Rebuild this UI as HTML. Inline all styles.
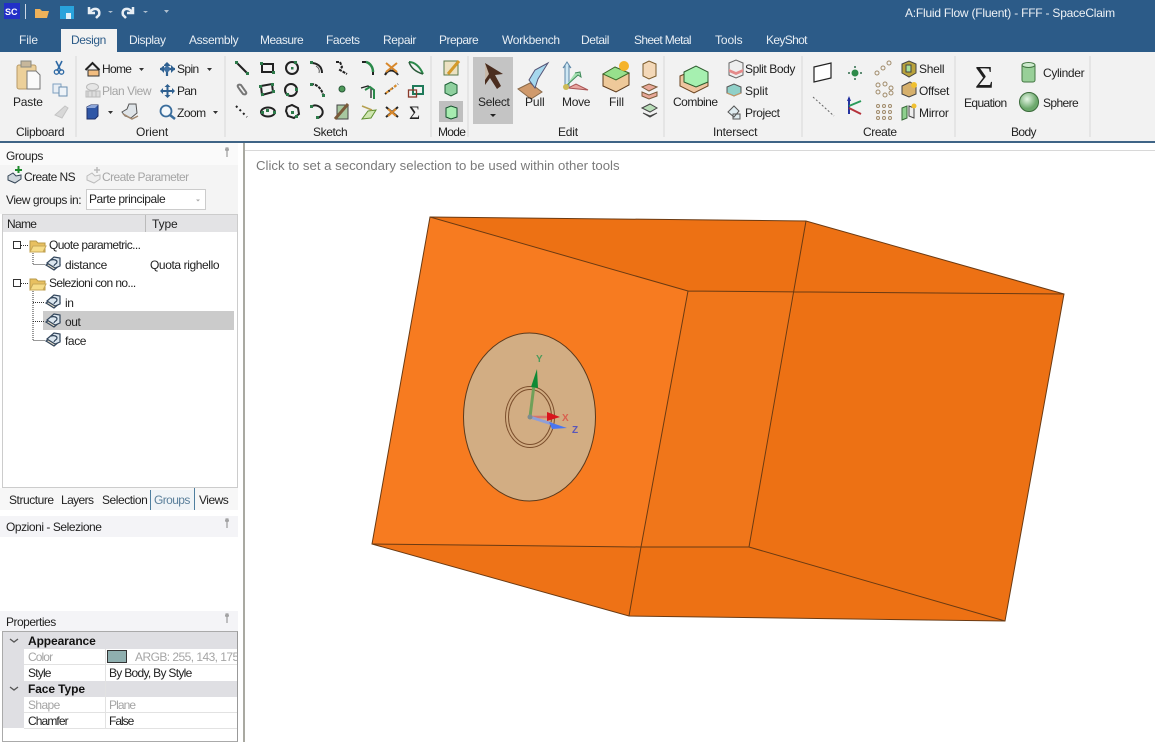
<!DOCTYPE html>
<html><head><meta charset="utf-8"><style>
html,body{margin:0;padding:0;width:1155px;height:742px;overflow:hidden;background:#fff}
body{position:relative;font-family:"Liberation Sans",sans-serif;font-size:12px;color:#222}
.t{position:absolute;white-space:nowrap;line-height:14px;letter-spacing:-.4px}
.b{position:absolute}
.w{color:#e8eef4}.g{color:#a5a5a5}
svg{position:absolute;left:0;top:0}
</style></head><body>
<div class="b" style="left:0;top:0;width:1155px;height:52px;background:#2c5b88"></div>
<div class="b" style="left:0;top:52px;width:1155px;height:89px;background:#f2f2f2"></div>
<div class="b" style="left:0;top:141px;width:1155px;height:2px;background:#3f6486"></div>
<div class="b" style="left:61px;top:29px;width:56px;height:23px;background:#f2f2f2"></div>
<div class="b" style="left:0;top:143px;width:238px;height:22px;background:#fafafa"></div>
<div class="b" style="left:0;top:165px;width:238px;height:49px;background:#f4f4f4"></div>
<div class="b" style="left:0;top:488px;width:238px;height:22px;background:#f7f7f7"></div>
<div class="b" style="left:0;top:516px;width:238px;height:21px;background:#f4f4f7"></div>
<div class="b" style="left:0;top:611px;width:238px;height:20px;background:#f4f4f7"></div>
<div class="b" style="left:243px;top:143px;width:2px;height:599px;background:#a9a9a1"></div>
<div class="b" style="left:245px;top:150px;width:910px;height:1px;background:#d8d8d8"></div>
<div class="b" style="left:2px;top:214px;width:236px;height:274px;background:#fff;border:1px solid #ccc;box-sizing:border-box"></div>
<div class="b" style="left:3px;top:215px;width:234px;height:17px;background:#e3e3e5"></div>
<div class="b" style="left:145px;top:215px;width:1px;height:17px;background:#bbb"></div>
<div class="b" style="left:43px;top:311px;width:191px;height:19px;background:#cbcbcb"></div>
<div class="b" style="left:86px;top:189px;width:120px;height:21px;background:#fff;border:1px solid #ccc;box-sizing:border-box"></div>
<div class="b" style="left:2px;top:631px;width:236px;height:111px;background:#fff;border:1px solid #aaa;border-right:1px solid #999;box-sizing:border-box"></div>
<div class="b" style="left:3px;top:632px;width:21px;height:96px;background:#dfdfe3"></div>
<div class="b" style="left:3px;top:632px;width:234px;height:17px;background:#dfdfe3"></div>
<div class="b" style="left:3px;top:681px;width:234px;height:16px;background:#dfdfe3"></div>
<div class="b" style="left:24px;top:664px;width:213px;height:1px;background:#e2e2e2"></div>
<div class="b" style="left:24px;top:712px;width:213px;height:1px;background:#e2e2e2"></div>
<div class="b" style="left:24px;top:728px;width:213px;height:1px;background:#e2e2e2"></div>
<div class="b" style="left:105px;top:649px;width:1px;height:80px;background:#e2e2e2"></div>
<div class="b" style="left:107px;top:650px;width:20px;height:13px;background:#8fafaf;border:1px solid #333;box-sizing:border-box"></div>
<div class="b" style="left:151px;top:490px;width:43px;height:20px;background:#f0f4f7"></div>
<div class="b" style="left:150px;top:490px;width:1px;height:20px;background:#4f7f9f"></div>
<div class="b" style="left:194px;top:488px;width:1px;height:22px;background:#4f7f9f"></div>

<svg width="1155" height="742" viewBox="0 0 1155 742">
<!-- model -->
<polygon points="430,217 806,221 1064,294 1005,621 629,616 372,544" fill="#ed7114"/>
<polygon points="430,217 688,291 641,547 372,544" fill="#f77b20"/>
<polygon points="688,291 795,292 749,547 641,547" fill="#f0761a"/>
<polygon points="372,544 641,547 629,616" fill="#ee7216"/>
<g fill="none" stroke="#6b3a12" stroke-width="1">
<polygon points="430,217 806,221 1064,294 1005,621 629,616 372,544"/>
<path d="M430,217 688,291 641,547 372,544M688,291 1064,294M806,221 749,547M641,547H749L1005,621M641,547 629,616"/>
</g>
<ellipse cx="529.500" cy="417" rx="66" ry="84" fill="#d2ad83" stroke="#5c3a1c"/>
<ellipse cx="530" cy="417" rx="24.500" ry="30.500" fill="none" stroke="#7c4f2d"/>
<ellipse cx="530" cy="417" rx="21.500" ry="27.500" fill="none" stroke="#7c4f2d"/>
<path d="M530,417 534,385" stroke="#6fa059" stroke-width="3"/>
<polygon points="537,369 538,388 531,387" fill="#0f8a35"/>
<path d="M530,417H552" stroke="#d8736b" stroke-width="2.500"/>
<polygon points="547,412 560,417 547,421" fill="#d8141c"/>
<path d="M530,417 552,424" stroke="#8f9fd8" stroke-width="3"/>
<polygon points="549,422 567,428 552,429" fill="#4a76f0"/>
<circle cx="530" cy="417" r="2.500" fill="#7d8b8f"/>
<text x="536" y="362" font-family="Liberation Sans" font-size="10" font-weight="bold" fill="#4c9a5a">Y</text>
<text x="562" y="421" font-family="Liberation Sans" font-size="10" font-weight="bold" fill="#d9614f">X</text>
<text x="572" y="433" font-family="Liberation Sans" font-size="10" font-weight="bold" fill="#5a56b8">Z</text>

<!-- QAT -->
<rect x="4" y="3" width="16" height="16" fill="#2230c8"/>
<text x="5" y="15" font-family="Liberation Sans" font-size="9" font-weight="bold" fill="#fff">SC</text>
<path d="M25.500,4V19" stroke="#cdd8e4"/>
<path d="M35,9h5l2,2h7l-2,7H35z" fill="#eeb25a"/>
<rect x="60" y="6" width="14" height="13" fill="#29a3dc"/><rect x="66" y="13" width="5" height="6" fill="#dfeff8"/>
<path d="M89,7v6h6M90,12c3-5 11-4 9,3l-3,3" fill="none" stroke="#e8eef4" stroke-width="2.500"/>
<path d="M133,7v6h-6M132,12c-3-5-11-4-9,3l3,3" fill="none" stroke="#e8eef4" stroke-width="2.500"/>
<path d="M108,11h5l-2.500,2zM143,11h5l-2.500,2zM164,10h5l-2.500,3z" fill="#aebfcf"/>

<!-- separators -->
<g stroke="#d8d8d8"><path d="M76,56V137M225,56V137M431,56V137M468,56V137M664,56V137M802,56V137M955,56V137M1090,56V137"/></g>

<!-- clipboard -->
<rect x="17" y="65" width="19" height="24" rx="2" fill="#ecd09a" stroke="#b89a68"/><rect x="21" y="61" width="10" height="6" fill="#c7b79b" stroke="#8a8a80"/><path d="M27,71h9l4,4v14H27z" fill="#fafafa" stroke="#777"/>
<path d="M56,61l5,10M62,61l-5,10" stroke="#2f6aa5" stroke-width="1.600"/><circle cx="56.500" cy="72" r="2.200" fill="none" stroke="#2f6aa5" stroke-width="1.300"/><circle cx="61.500" cy="72" r="2.200" fill="none" stroke="#2f6aa5" stroke-width="1.300"/>
<rect x="53" y="84" width="8" height="9" fill="#e8eef4" stroke="#7fa0c0"/><rect x="59" y="87" width="8" height="9" fill="#eef3f8" stroke="#6a8fb0"/>
<path d="M55,115l10-9 3,2-6,10z" fill="#d8d8d8" stroke="#c4c4c4"/>

<!-- orient -->
<path d="M88,70h11v6H88z" fill="#f2bd80" stroke="#333"/><path d="M85.500,70l7-7 7,7" fill="none" stroke="#222" stroke-width="2"/>
<ellipse cx="92.500" cy="87" rx="6" ry="3.500" fill="#e6e6e6" stroke="#bbb"/><path d="M86,91h14v6H86zM88,91v6M92,91v6M96,91v6" fill="#ddd" stroke="#bbb"/>
<path d="M87,107l4-2h7v11l-3,3h-8z" fill="#2f56a6" stroke="#1d2d66"/><path d="M87,107l4-2h7l-3,3h-8z" fill="#8da6d8"/>
<path d="M122,112l5-3 2-5h7l1,9-6,5-6-2z" fill="#dfe4e8" stroke="#555"/><path d="M123,114l9,5 6-3" fill="none" stroke="#a08870" stroke-width="1.500"/>
<path d="M160,69h15M167,63v13" stroke="#2f6090" stroke-width="2.200"/><path d="M160,69l4-4v8zM175,69l-4-4v8zM167,62l-4,4h8z" fill="#2f6090"/><circle cx="167" cy="69" r="3" fill="#3f70a2"/>
<path d="M162,91h11M167.500,86v10" stroke="#2f6090" stroke-width="2"/><path d="M167.500,84l-3,3h6zM167.500,98l-3-3h6zM160,91l3-3v6zM175,91l-3-3v6z" fill="#2f6090"/>
<circle cx="166" cy="111" r="5.500" fill="#f4f8fb" stroke="#3a6d9c" stroke-width="1.800"/><path d="M170,115l5,4" stroke="#3a6d9c" stroke-width="2.500"/>
<path d="M139,68h5l-2.500,3zM207,68h5l-2.500,3zM108,111h5l-2.500,3zM213,111h5l-2.500,3z" fill="#333"/>

<!-- sketch left -->
<g fill="none" stroke="#222" stroke-width="2">
<path d="M236,62l11,11"/>
<rect x="262" y="64" width="11" height="8"/>
<circle cx="292" cy="68" r="6"/>
<path d="M311,63c6,0 11,3 11,10"/><path d="M316,66c3,2 4,4 3,7" stroke-width="1" stroke="#555"/>
<path d="M240,90l-2-3c-1-2 1-3 3-2l5,7c1,2-1,3-3,2z" stroke="#777"/>
<path d="M261,86l11-2 1,8-11,3z"/>
<circle cx="291" cy="90" r="6"/>
<path d="M311,84c6,0 11,5 12,11" stroke-dasharray="3 1"/>
<path d="M236,106l11,11" stroke-dasharray="2 3"/>
<ellipse cx="268" cy="112" rx="7" ry="4.500"/>
<path d="M287,107l5-2 6,3 1,6-5,4-6-2-2-5z"/>
<path d="M311,107c2-2 5-2 7-1c5,2 6,7 3,10c-1,1-3,2-5,2"/>
</g>
<g fill="#2d7a4a"><rect x="235" y="61" width="3" height="3"/><rect x="246" y="72" width="3" height="3"/><rect x="260" y="62" width="3" height="3"/><rect x="272" y="71" width="3" height="3"/><rect x="291" y="67" width="2.500" height="2.500"/><rect x="294" y="61" width="3" height="3"/><rect x="310" y="61" width="3" height="3"/><rect x="259" y="85" width="3" height="3"/><rect x="271" y="83" width="3" height="3"/><rect x="272" y="90" width="3" height="3"/><rect x="261" y="93" width="3" height="3"/><rect x="286" y="93" width="3" height="3"/><rect x="295" y="88" width="3" height="3"/><rect x="310" y="83" width="3" height="3"/><rect x="322" y="94" width="3" height="3"/><rect x="266" y="109" width="3" height="3"/><rect x="261" y="111" width="3" height="3"/><rect x="273" y="111" width="3" height="3"/><rect x="291" y="111" width="3" height="3"/><rect x="295" y="115" width="3" height="3"/><rect x="310" y="105" width="3" height="3"/><rect x="316" y="116" width="3" height="3"/></g>

<!-- sketch right -->
<g fill="none" stroke-width="2">
<path d="M336,62h4l2,5-2,3 7,4" stroke="#222" stroke-dasharray="3 1"/>
<path d="M362,62h4" stroke="#222"/><path d="M366,62c4,1 7,5 7,10" stroke="#2a8a4a" stroke-width="2.500"/><path d="M373,72v3" stroke="#222"/>
<path d="M385,75c3-6 9-6 13,0" stroke="#222"/><path d="M386,63l11,9M397,63l-11,9" stroke="#d8882c"/>
<path d="M409,62c6,0 11,5 14,12" stroke="#2a8a4a"/><path d="M409,62c2,6 7,10 14,12" stroke="#2a5a3a" stroke-width="1.500"/>
<path d="M361,88l7-2 3,2v10" stroke="#222" stroke-width="1.300"/><path d="M365,90l5-3 4,3v9" stroke="#2a8a4a"/>
<path d="M385,94l13-10" stroke="#222" stroke-dasharray="2 2"/><path d="M386,93l12-9" stroke="#e0902c" stroke-dasharray="3 2"/>
<rect x="413" y="86" width="10" height="8" stroke="#1f7a5a"/><rect x="408.500" y="90" width="8" height="7" stroke="#8a3a2a" stroke-width="1.300"/>
<path d="M386,107l12,10M398,107l-12,10" stroke="#222"/><path d="M388,109l8,7M396,109l-8,7" stroke="#d8882c"/>
</g>
<circle cx="342" cy="89" r="3" fill="#4f9a5a" stroke="#2a5a3a"/>
<path d="M337,105h11v14h-11z" fill="#a8c8a0" stroke="#444"/><path d="M335,119l13-15" stroke="#7a5a3a" stroke-width="3"/>
<path d="M362,119l6-8 8-1-5,8z" fill="#cfe6b0" stroke="#5f9030"/><path d="M362,106l10,4" stroke="#b5a050" stroke-width="1.500" fill="none"/>
<text x="409" y="119" font-family="Liberation Serif" font-size="19" fill="#222">Σ</text>

<!-- mode -->
<rect x="444" y="61" width="14" height="14" fill="#ece2c2" stroke="#5c7a4c"/><path d="M448,74l11-13" stroke="#d49a2a" stroke-width="3"/>
<path d="M445,85l6-3 6,3v8l-6,3-6-3z" fill="#8fd09f" stroke="#1d5f36"/>
<rect x="439" y="101" width="24" height="21" fill="#bfbfbf"/>
<path d="M446,108l5-2 6,2v9l-6,2-5-2z" fill="#a7ecb0" stroke="#16512e"/>

<!-- edit -->
<rect x="473" y="57" width="40" height="67" fill="#c4c4c4"/>
<polygon points="485,63 485,85 490,78 497,89 501,86 495,75 503,74" fill="#4a2d1f"/><polygon points="485,63 485,80 489,74" fill="#c7b8a8"/>
<path d="M490,114h6l-3,3z" fill="#222"/>
<polygon points="518,89 530,83 542,92 531,99" fill="#d09a6c" stroke="#8a6a4a"/><polygon points="548,63 535,70 529,80 535,88 538,79" fill="#a6d8ee" stroke="#557"/>
<path d="M565,66v22h4V66l2,2-4-6-4,6z" fill="#cfe8f4" stroke="#5f88a8"/><path d="M566,86l12-11 3,2-1-5-5 1" fill="#a4e0b0" stroke="#3f8a5a"/><path d="M568,88l20,2-12-6z" fill="#e8a5a0" stroke="#a55"/><circle cx="566" cy="87" r="3" fill="#cdbb55"/>
<path d="M603,74l12-7 14,6v12l-13,7-13-6z" fill="#eec99a" stroke="#5c3a1c"/><path d="M603,74l12-7 14,6-13,7z" fill="#97e08c" stroke="#3a6a2a"/><circle cx="624" cy="66" r="5" fill="#f5b32a"/>
<path d="M643,64l6-3 7,3v12l-7,3-6-3z" fill="#f3d8b8" stroke="#7a5a2a"/>
<path d="M642,87l7-3 8,3-8,4zM642,92l7 3 8-3v4l-8,3-7-3z" fill="#e8a898" stroke="#7a5a3a"/>
<path d="M642,108l8-4 7,4-7,4zM643,113l7,3 7-3-7,4z" fill="#b8ddb8" stroke="#444"/>

<!-- intersect -->
<path d="M680,76l14-6 14,6v10l-14,7-14-7z" fill="#eec5a0" stroke="#6a4420"/>
<path d="M684,72l12-6 12,6v10l-12,5-12-5z" fill="#a6f0b0" stroke="#2c5a2c"/>
<path d="M729,63l7-3 7,3v12l-7,3-7-3z" fill="#eee" stroke="#666"/><path d="M729,69l7,3 7-3v3l-7,3-7-3z" fill="#e58a8a"/>
<path d="M727,87l7-3 7,3v6l-7,3-7-3z" fill="#90d0c8" stroke="#555"/><path d="M727,93l7,3 7-3" fill="none" stroke="#c96"/>
<path d="M728,112l6-6 5,5-5,6zM733,114h7v5h-7z" fill="#e0ecf0" stroke="#555"/>

<!-- create -->
<path d="M814,67l17-4v15l-17,4z" fill="#fff" stroke="#222" stroke-width="1.200"/>
<path d="M813,97l21,19" stroke="#666" stroke-dasharray="2 2"/>
<circle cx="855" cy="73" r="3.500" fill="#2e8a4a"/><path d="M848,73h2M860,73h2M855,66v2M855,78v2" stroke="#2e6a4a" stroke-width="1.500"/>
<path d="M849,114V98" stroke="#2533a0" stroke-width="2"/><path d="M849,96l-2,5h4z" fill="#2533a0"/><path d="M849,106l12-5" stroke="#2a9a5a" stroke-width="2"/><path d="M849,108l12,6" stroke="#b5313a" stroke-width="2"/>
<g fill="none" stroke="#a08b6a"><circle cx="877" cy="73" r="2"/><circle cx="883" cy="68" r="2"/><circle cx="889" cy="63" r="2"/>
<circle cx="878" cy="85" r="2"/><circle cx="885" cy="84" r="2"/><circle cx="891" cy="88" r="2"/><circle cx="878" cy="92" r="2"/><circle cx="885" cy="95" r="2"/><circle cx="891" cy="93" r="2"/>
<circle cx="878" cy="106" r="1.500"/><circle cx="884" cy="106" r="1.500"/><circle cx="890" cy="106" r="1.500"/><circle cx="878" cy="112" r="1.500"/><circle cx="884" cy="112" r="1.500"/><circle cx="890" cy="112" r="1.500"/><circle cx="878" cy="118" r="1.500"/><circle cx="884" cy="118" r="1.500"/><circle cx="890" cy="118" r="1.500"/></g>
<path d="M902,64l7-3 7,3v9l-7,4-7-4z" fill="#b8a23c" stroke="#444"/><rect x="906" y="65" width="5" height="7" fill="#a6e09c" stroke="#444"/>
<path d="M902,86l8-4 6,4v8l-7,3-7-3z" fill="#d6b06c" stroke="#444"/><circle cx="914" cy="85" r="3" fill="#f0c030"/>
<path d="M902,108l5-2v12l-5,2z" fill="#8ed08e" stroke="#3a6a3a"/><path d="M909,106l5 2v10l-5-2z" fill="#eee" stroke="#444"/><circle cx="914" cy="106" r="2.500" fill="#f0c030"/>

<!-- body -->
<text x="975" y="88" font-family="Liberation Serif" font-size="32" fill="#1f1f1f">Σ</text>
<rect x="1022" y="64" width="13" height="18" rx="2" fill="#98cf98" stroke="#447744"/><ellipse cx="1028.500" cy="65" rx="6.500" ry="2.500" fill="#cdeacd" stroke="#447744"/>
<defs><radialGradient id="s" cx=".4" cy=".35"><stop offset="0" stop-color="#e6f6e6"/><stop offset="1" stop-color="#6ca86c"/></radialGradient></defs>
<circle cx="1029" cy="102" r="9.500" fill="url(#s)" stroke="#3a6a3a"/>

<!-- pins -->
<path d="M225,150h4M227,150v4M226,150v-2h2v2M227,154v3" stroke="#888" fill="none"/>
<path d="M225,521h4M227,521v4M226,521v-2h2v2M227,525v3" stroke="#888" fill="none"/>
<path d="M225,616h4M227,616v4M226,616v-2h2v2M227,620v3" stroke="#888" fill="none"/>
<!-- create NS -->
<path d="M8,176l5-3 3,3 5,-1v4l-6,4-7-3z" fill="#cfd6dc" stroke="#345"/><path d="M15,170h7M18.500,166v7" stroke="#1f8a2e" stroke-width="2"/>
<path d="M87,176l5-3 3,3 5,-1v4l-6,4-7-3z" fill="#eee" stroke="#bbb"/><path d="M94,170h6M97,167v6" stroke="#bbb" stroke-width="1.500"/>
<path d="M196,199.500h4l-2,2z" fill="#aaa"/>
<!-- tree -->
<g fill="none" stroke="#333" stroke-dasharray="1 1"><path d="M21,245.500h7M21,283.500h7M33,253v11.500h12M33,291v49.500h12M33,302.500h12M33,321.500h12"/></g>
<rect x="13.500" y="241.500" width="7" height="7" fill="#fff" stroke="#333"/>
<rect x="13.500" y="279.500" width="7" height="7" fill="#fff" stroke="#333"/>
<path d="M30,241h6l2,2h7v9H30z" fill="#e8c060" stroke="#b89a48"/><path d="M30,252l3-6h13l-3,6z" fill="#f6dc88" stroke="#c8a858"/>
<path d="M30,279h6l2,2h7v9H30z" fill="#e8c060" stroke="#b89a48"/><path d="M30,290l3-6h13l-3,6z" fill="#f6dc88" stroke="#c8a858"/>
<g stroke="#33465c" stroke-width="1.200" fill="#e6dcc8">
<path d="M46,265l7-4 7,4-6,5z"/><path d="M47,263l7-6 6,1v8l-5,2z" fill="#dbe6ef"/><path d="M51,260c3-1 6,0 6,2s-3,2-3,4" fill="none"/>
<path d="M46,303l7-4 7,4-6,5z"/><path d="M47,301l7-6 6,1v8l-5,2z" fill="#dbe6ef"/><path d="M51,298c3-1 6,0 6,2s-3,2-3,4" fill="none"/>
<path d="M46,322l7-4 7,4-6,5z"/><path d="M47,320l7-6 6,1v8l-5,2z" fill="#dbe6ef"/><path d="M51,317c3-1 6,0 6,2s-3,2-3,4" fill="none"/>
<path d="M46,341l7-4 7,4-6,5z"/><path d="M47,339l7-6 6,1v8l-5,2z" fill="#dbe6ef"/><path d="M51,336c3-1 6,0 6,2s-3,2-3,4" fill="none"/>
</g>
<path d="M10,639l4,3 4-3M10,687l4,3 4-3" stroke="#555" fill="none" stroke-width="1.300"/>
</svg>

<div class="t w" style="left:905px;top:6px;letter-spacing:-.22px;color:#eef2f6">A:Fluid Flow (Fluent) - FFF - SpaceClaim</div>
<div class="t w" style="left:19px;top:33px;letter-spacing:-.1px">File</div>
<div class="t" style="left:71px;top:33px;color:#2c5b88">Design</div>
<div class="t w" style="left:129px;top:33px">Display</div>
<div class="t w" style="left:189px;top:33px;letter-spacing:-.35px">Assembly</div>
<div class="t w" style="left:260px;top:33px;letter-spacing:-.5px">Measure</div>
<div class="t w" style="left:326px;top:33px">Facets</div>
<div class="t w" style="left:383px;top:33px">Repair</div>
<div class="t w" style="left:439px;top:33px;letter-spacing:-.5px">Prepare</div>
<div class="t w" style="left:502px;top:33px;letter-spacing:-.3px">Workbench</div>
<div class="t w" style="left:581px;top:33px;letter-spacing:-.45px">Detail</div>
<div class="t w" style="left:634px;top:33px;letter-spacing:-.65px">Sheet Metal</div>
<div class="t w" style="left:715px;top:33px;letter-spacing:-.1px">Tools</div>
<div class="t w" style="left:766px;top:33px;letter-spacing:-.65px">KeyShot</div>

<div class="t" style="left:13px;top:95px;letter-spacing:-.2px">Paste</div>
<div class="t" style="left:16px;top:125px;letter-spacing:-.35px">Clipboard</div>
<div class="t" style="left:102px;top:62px;letter-spacing:-.7px">Home</div>
<div class="t g" style="left:102px;top:84px;letter-spacing:-.45px">Plan View</div>
<div class="t" style="left:177px;top:62px;letter-spacing:-.6px">Spin</div>
<div class="t" style="left:177px;top:84px;letter-spacing:-.7px">Pan</div>
<div class="t" style="left:177px;top:106px;letter-spacing:-.5px">Zoom</div>
<div class="t" style="left:136px;top:125px;letter-spacing:-.1px">Orient</div>
<div class="t" style="left:313px;top:125px">Sketch</div>
<div class="t" style="left:438px;top:125px;letter-spacing:-.7px">Mode</div>
<div class="t" style="left:478px;top:95px;letter-spacing:-.3px">Select</div>
<div class="t" style="left:525px;top:95px;letter-spacing:-.1px">Pull</div>
<div class="t" style="left:562px;top:95px;letter-spacing:-.3px">Move</div>
<div class="t" style="left:609px;top:95px;letter-spacing:-.1px">Fill</div>
<div class="t" style="left:558px;top:125px;letter-spacing:-.2px">Edit</div>
<div class="t" style="left:673px;top:95px;letter-spacing:-.5px">Combine</div>
<div class="t" style="left:745px;top:62px">Split Body</div>
<div class="t" style="left:745px;top:84px;letter-spacing:-.1px">Split</div>
<div class="t" style="left:745px;top:106px">Project</div>
<div class="t" style="left:713px;top:125px;letter-spacing:-.2px">Intersect</div>
<div class="t" style="left:919px;top:62px;letter-spacing:-.3px">Shell</div>
<div class="t" style="left:919px;top:84px;letter-spacing:-.3px">Offset</div>
<div class="t" style="left:919px;top:106px;letter-spacing:-.3px">Mirror</div>
<div class="t" style="left:863px;top:125px">Create</div>
<div class="t" style="left:964px;top:96px;letter-spacing:-.6px">Equation</div>
<div class="t" style="left:1043px;top:66px;letter-spacing:-.35px">Cylinder</div>
<div class="t" style="left:1043px;top:96px;letter-spacing:-.6px">Sphere</div>
<div class="t" style="left:1011px;top:125px;letter-spacing:-.6px">Body</div>

<div class="t" style="left:256px;top:159px;color:#7a7a7a;font-size:13.200px;letter-spacing:0">Click to set a secondary selection to be used within other tools</div>

<div class="t" style="left:6px;top:149px">Groups</div>
<div class="t" style="left:24px;top:170px;letter-spacing:-.55px">Create NS</div>
<div class="t g" style="left:102px;top:170px;letter-spacing:-.55px">Create Parameter</div>
<div class="t" style="left:6px;top:193px;letter-spacing:-.45px">View groups in:</div>
<div class="t" style="left:89px;top:192px;letter-spacing:-.45px">Parte principale</div>
<div class="t" style="left:7px;top:217px;letter-spacing:-.7px">Name</div>
<div class="t" style="left:152px;top:217px;letter-spacing:-.1px">Type</div>
<div class="t" style="left:49px;top:238px;letter-spacing:-.6px">Quote parametric...</div>
<div class="t" style="left:65px;top:258px;letter-spacing:-.35px">distance</div>
<div class="t" style="left:150px;top:258px">Quota righello</div>
<div class="t" style="left:49px;top:276px;letter-spacing:-.6px">Selezioni con no...</div>
<div class="t" style="left:65px;top:296px">in</div>
<div class="t" style="left:65px;top:315px">out</div>
<div class="t" style="left:65px;top:334px">face</div>
<div class="t" style="left:9px;top:493px;letter-spacing:-.45px">Structure</div>
<div class="t" style="left:61px;top:493px;letter-spacing:-.6px">Layers</div>
<div class="t" style="left:102px;top:493px;letter-spacing:-.45px">Selection</div>
<div class="t" style="left:154px;top:493px;color:#5a7f9a;letter-spacing:-.6px">Groups</div>
<div class="t" style="left:199px;top:493px;letter-spacing:-.5px">Views</div>
<div class="t" style="left:6px;top:520px;letter-spacing:-.45px">Opzioni - Selezione</div>
<div class="t" style="left:6px;top:615px;letter-spacing:-.5px">Properties</div>
<div class="t" style="left:28px;top:634px;font-weight:bold;color:#111;letter-spacing:-.1px">Appearance</div>
<div class="t g" style="left:28px;top:650px;letter-spacing:-.9px">Color</div>
<div class="t g" style="left:135px;top:650px;width:102px;overflow:hidden;letter-spacing:-.55px">ARGB: 255, 143, 175</div>
<div class="t" style="left:28px;top:666px;letter-spacing:-.8px">Style</div>
<div class="t" style="left:109px;top:666px;letter-spacing:-.7px">By Body, By Style</div>
<div class="t" style="left:28px;top:682px;font-weight:bold;color:#111;letter-spacing:-.1px">Face Type</div>
<div class="t g" style="left:28px;top:698px;letter-spacing:-.6px">Shape</div>
<div class="t g" style="left:109px;top:698px;letter-spacing:-.9px">Plane</div>
<div class="t" style="left:28px;top:714px;letter-spacing:-.9px">Chamfer</div>
<div class="t" style="left:109px;top:714px;letter-spacing:-1px">False</div>
</body></html>
